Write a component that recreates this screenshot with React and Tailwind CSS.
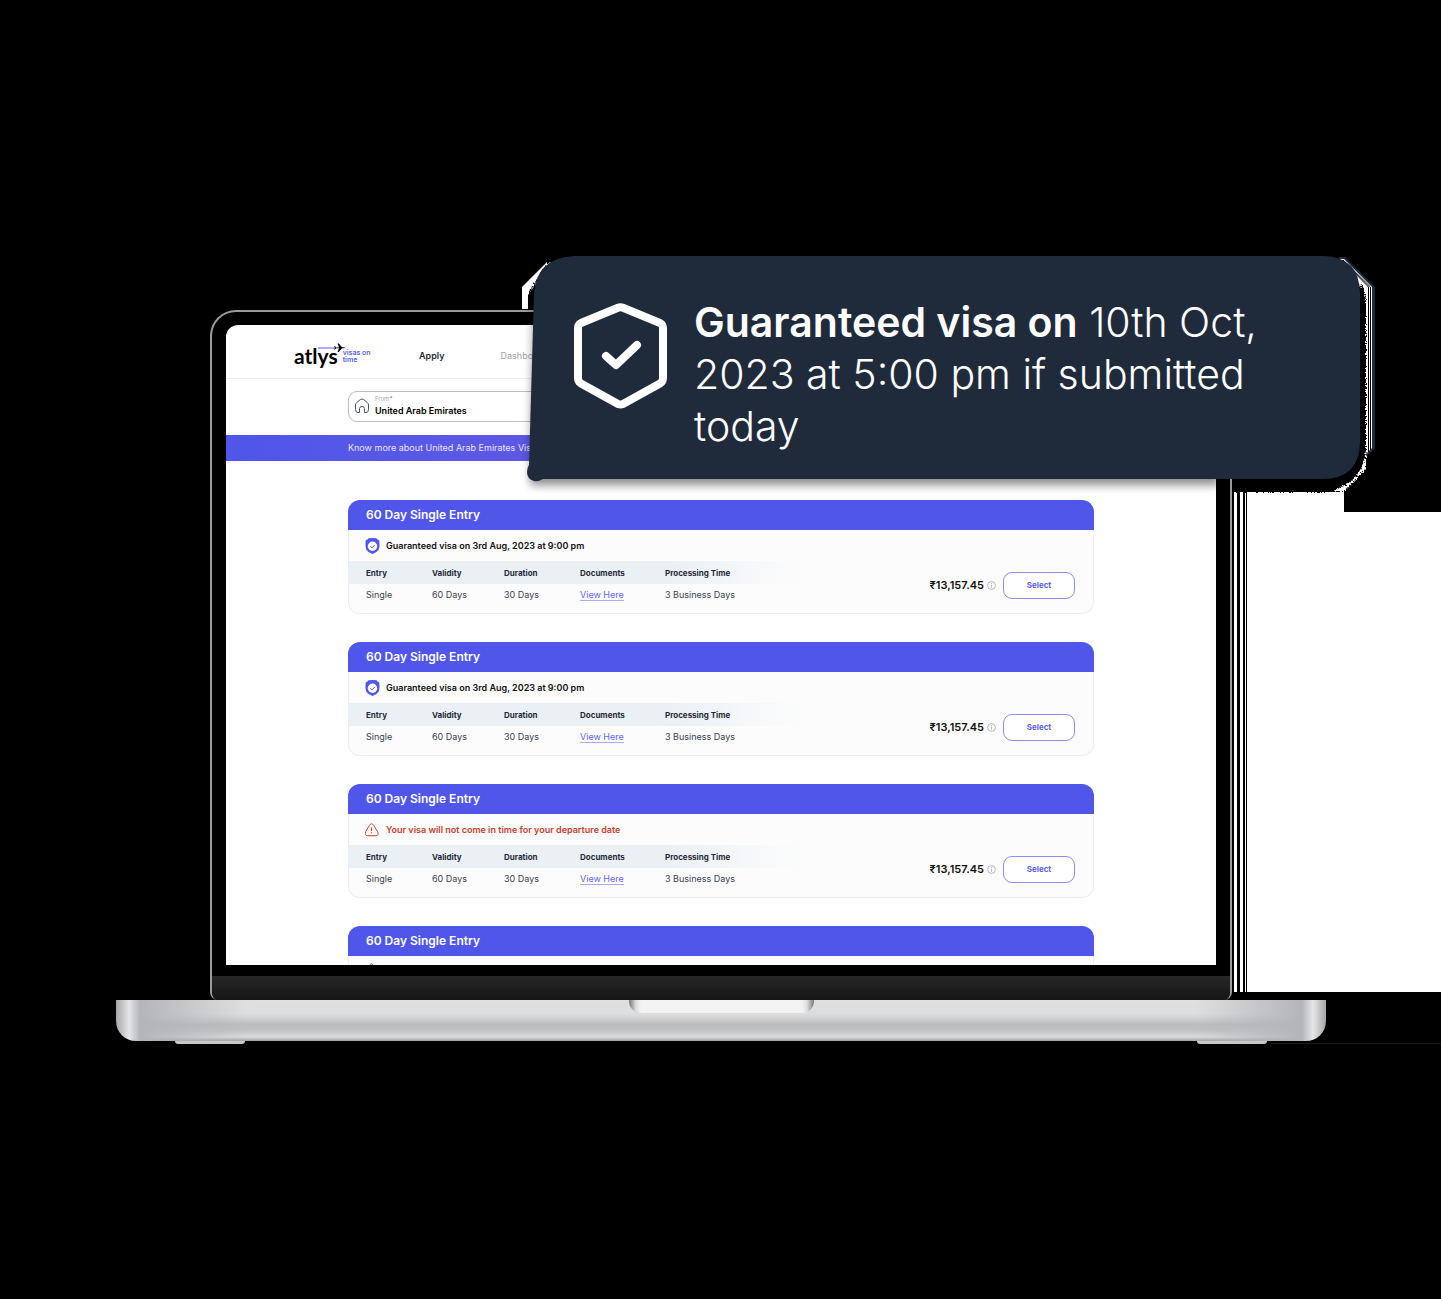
const visas = [
  { id: 1, onTime: true },
  { id: 2, onTime: true },
  { id: 3, onTime: false },
];

function Logo() {
  return (
    <a href="#home" className="flex w-[80px] items-center gap-[5px]" aria-label="atlys, visas on time">
      <span className="relative font-['Lato','Open_Sans',sans-serif] text-[21px] leading-6 font-bold text-black">
        atlys
        <svg className="absolute -top-0.5 left-6 h-3 w-7" viewBox="0 0 28 12" aria-hidden="true">
          <path d="M0 6H18" stroke="#5b5ff0" strokeWidth="1" />
          <path d="M18 5.4h3L19.6 1.5h1.2L24 5.2h2.4q1 .3 0 1H24L20.800 10h-1.2L21 6.300h-3l-1 1.2h-.8L17 5.800 16.200 4H17z" fill="#000" />
        </svg>
      </span>
      <span className="pt-px text-[7px] leading-[7px] font-semibold whitespace-pre text-[#5b5ff0]">{"visas on\ntime"}</span>
    </a>
  );
}

function ShieldIcon() {
  return (
    <svg className="h-4 w-[15px]" viewBox="0 0 15 16" aria-hidden="true">
      <path d="M3.500.3Q7.500-.2 11.500.3L12.500 1.600 14.200 2.200Q15 8 13.800 11.500 12 14.500 7.500 16 3 14.500 1.200 11.500 0 8 .8 2.200L2.500 1.600z" fill="#4f56e9" />
      <circle cx="7.500" cy="8.300" r="4.700" fill="#fff" />
      <path d="M5.300 8.300 7 9.900 9.800 6.900" fill="none" stroke="#4f56e9" strokeWidth="1" />
    </svg>
  );
}

function AlertIcon() {
  return (
    <svg className="h-4 w-[15px] shrink-0" viewBox="0 0 15 16" fill="none" stroke="#cf3b33" aria-hidden="true">
      <path d="M4.300 3.500Q6.500.2 8.700 3.500L12.500 9.500Q14.300 13.500 11 13.700H2.500Q-.8 13.500.8 9.500z" strokeWidth="1" />
      <path d="M6.500 5.500V9M6.500 10.200v1" strokeWidth="1.200" />
    </svg>
  );
}

function CardTitle() {
  return <h2 className="rounded-t-xl bg-[#4f56e9] pl-[18px] text-xs leading-[30px] font-semibold text-white">60 Day Single Entry</h2>;
}

function VisaCard({ onTime }) {
  return (
    <article className="shrink-0">
      <CardTitle />
      <div className="rounded-b-xl border border-t-0 border-[#ececfb] bg-[#fcfcfc]">
        <p className={onTime ? "flex h-[31px] items-center gap-1.5 pl-4 text-[9px] font-semibold text-[#111]" : "flex h-[31px] items-center gap-1.5 pl-4 text-[9px] font-semibold text-[#c2412d]"}>
          {onTime ? <ShieldIcon /> : <AlertIcon />}
          {onTime ? "Guaranteed visa on 3rd Aug, 2023 at 9:00 pm" : "Your visa will not come in time for your departure date"}
        </p>
        <div className="flex items-center justify-between pr-[18px]">
          <table className="mb-[7px] w-[452px] table-fixed text-left text-[#3a4150]">
            <thead className="bg-linear-to-r from-[#ebf0f5] from-70% to-[#fcfcfc] text-[8px] text-[#1e2939]">
              <tr className="h-[23px]">
                <th className="w-[83px] pl-[17px] font-bold">Entry</th>
                <th className="w-[72px] font-bold">Validity</th>
                <th className="w-[76px] font-bold">Duration</th>
                <th className="w-[85px] font-bold">Documents</th>
                <th className="font-bold">Processing Time</th>
              </tr>
            </thead>
            <tbody className="text-[9px]">
              <tr className="h-[22px]">
                <td className="pl-[17px]">Single</td>
                <td>60 Days</td>
                <td>30 Days</td>
                <td>
                  <a href="#documents" className="border-b border-[#a9abf6] text-[#6366f1]">View Here</a>
                </td>
                <td>3 Business Days</td>
              </tr>
            </tbody>
          </table>
          <div className="flex items-center pb-1">
            <span className="text-[11px] font-semibold text-[#111]">₹13,157.45</span>
            <svg className="mr-[7px] ml-[3px] size-[9px]" viewBox="0 0 9 9" fill="none" stroke="#a3a7b0" strokeWidth=".8" aria-hidden="true">
              <circle cx="4.500" cy="4.500" r="3.900" />
              <path d="M4.500 2V3M4.500 3.800V6.800" />
            </svg>
            <button type="button" className="h-[27px] w-[72px] rounded-[9px] border border-[#8b8ff5] bg-white text-[8px] font-bold text-[#5b5ff0]">Select</button>
          </div>
        </div>
      </div>
    </article>
  );
}

function PeekingCard() {
  return (
    <article>
      <CardTitle />
      <div className="h-10 border-x border-[#ececfb] bg-[#fcfcfc] pt-1.5 pl-4">
        <AlertIcon />
      </div>
    </article>
  );
}

function Screen() {
  return (
    <div className="flex aspect-[99/64] w-full flex-col overflow-hidden rounded-t-[12px] bg-white">
      <header className="flex h-[54px] shrink-0 items-center border-b border-[#ececf0] px-[68px] pt-2">
        <Logo />
        <nav className="flex gap-14 pl-[45px] text-[9px]">
          <a href="#apply" className="font-semibold text-[#1e2939]">Apply</a>
          <a href="#dashboard" className="text-[#9aa1b0]">Dashboard</a>
        </nav>
      </header>
      <div className="mx-auto flex h-14 w-full max-w-[746px] shrink-0 items-center pb-0.5">
        <div className="flex h-[31px] w-1/2 items-center gap-[5px] rounded-[9px] border border-[#b9bcc8] px-[5px]">
          <svg className="size-4" viewBox="0 0 16 16" fill="none" stroke="#4a5163" strokeWidth="1" aria-hidden="true">
            <path d="M5.500 14.500H4Q1.500 14.500 1.500 11.500V7Q1.500 5.500 3 4.300L6.300 1.600Q8 .5 9.700 1.600L13 4.300Q14.500 5.500 14.500 7V11.500Q14.500 14.500 12 14.500H10.500V10.500Q10.300 8.500 8 8.500 5.700 8.500 5.500 10.500z" />
          </svg>
          <div className="flex grow flex-col">
            <label htmlFor="from" className="text-[6px] leading-[8px] text-[#a3a7b8]">From<span className="text-[#5b5ff0]">*</span></label>
            <input id="from" defaultValue="United Arab Emirates" className="h-3.5 w-full bg-transparent text-[9px] font-semibold text-black outline-none" />
          </div>
        </div>
      </div>
      <div className="shrink-0 bg-linear-to-r from-[#4f56e9] to-[#7c5cd9] text-[9px] leading-[26px] text-[#e6e6fd]">
        <p className="mx-auto max-w-[746px]">Know more about United Arab Emirates Visa</p>
      </div>
      <main className="mx-auto flex w-full max-w-[746px] flex-col gap-7 pt-[39px]">
        {visas.map((v) => <VisaCard key={v.id} onTime={v.onTime} />)}
        <PeekingCard />
      </main>
    </div>
  );
}

function Base() {
  return (
    <div className="relative">
      <div className="flex h-[41px] justify-center rounded-b-[20px] bg-[linear-gradient(90deg,#a5a6a9_0,#e6e6e7_13px,#b4b5b8_24px,#b4b5b800_130px,#b4b5b800_calc(100%-130px),#b4b5b8_calc(100%-24px),#e6e6e7_calc(100%-13px),#a5a6a9_100%),linear-gradient(180deg,#dedfe0_0,#dcdddf_35%,#bbbcbe_60%,#c2c3c5_75%,#dadbdd_90%,#a0a1a3_100%)]">
        <div className="h-[13px] w-[185px] rounded-b-[12px] bg-[linear-gradient(90deg,#777_0,#ddd_7px,#f3f3f3_12px,#f3f3f3_calc(100%-12px),#ddd_calc(100%-7px),#777_100%)]" />
      </div>
      <div className="flex justify-between px-[59px]">
        <div className="h-[3px] w-[70px] rounded-b-sm bg-[#c6c9c8]" />
        <div className="h-[3px] w-[70px] rounded-b-sm bg-[#c6c9c8]" />
      </div>
    </div>
  );
}

function Callout() {
  return (
    <aside className="absolute -top-[60px] left-[404px] h-[250px] w-[860px]">
      <svg className="absolute inset-0 size-full" viewBox="520 250 860 250" aria-hidden="true">
        <defs>
          <filter id="soft" x="-5%" y="-10%" width="110%" height="125%"><feGaussianBlur stdDeviation="5" /></filter>
          <filter id="grain" x="-5%" y="-5%" width="110%" height="110%">
            <feTurbulence type="fractalNoise" baseFrequency=".9" numOctaves="1" seed="3" result="n" />
            <feDisplacementMap in="SourceGraphic" in2="n" scale="5" xChannelSelector="R" yChannelSelector="G" />
          </filter>
          <clipPath id="display"><path d="M500 250H1217V520H500z" /></clipPath>
        </defs>
        <path d="M522 309V287L547 262H552L528 295V309z" fill="#fff" />
        <path d="M530 309V292L550 262" fill="none" stroke="#000" strokeWidth="3" strokeDasharray="2 1" filter="url(#grain)" />
        <path d="M1338 257H1345L1375 287V448L1366 457V290z" fill="#1f2b3b" />
        <path d="M1337 259H1344L1372 287V448L1364 456V292z" fill="#fff" />
        <path d="M1342 260 1368.500 287V452M1343 260 1370.500 287V450" fill="none" stroke="#000" />
        <path d="M1366 455V468L1345 491H1334L1360 450z" fill="#fff" filter="url(#grain)" />
        <path d="M1234 470H1350L1361 282Q1366 292 1366 305V450Q1362 487 1324 492H1234z" fill="#060606" filter="url(#grain)" />
        <path d="M534 300 530 485H1220V300z" fill="#000" opacity=".45" filter="url(#soft)" clipPath="url(#display)" />
        <path d="M574 256H1322Q1360 256 1360 294V441Q1360 479 1322 479H543Q538 482 534 481 527 479 527 472 527 468 529 465L534 294Q536 258 574 256z" fill="#1f2b3b" />
      </svg>
      <div className="relative flex gap-[26px] pt-[46px] pl-[53px]">
        <svg className="mt-[7px] h-[106px] w-[95px] shrink-0" viewBox="0 0 95 106" fill="none" stroke="#fff" strokeLinejoin="round" strokeLinecap="round" aria-hidden="true">
          <path d="M45 4.800Q47.500 3.800 50 4.800L87 20Q90 21.500 90 25V75Q90 78.500 87 80.500L50 101Q47.500 102 45 101L8 80.500Q5 78.500 5 75V25Q5 21.500 8 20z" strokeWidth="8" />
          <path d="M33 53 43 62 64 42" strokeWidth="8" />
        </svg>
        <p className="w-[610px] text-[41px] leading-[52px] font-light text-white">
          <strong className="font-semibold">Guaranteed visa on</strong> 10th Oct,<br />2023 at 5:00 pm if submitted<br />today
        </p>
      </div>
    </aside>
  );
}

export default function App() {
  return (
    <div className="min-h-screen overflow-hidden bg-black pt-[310px] pl-px font-['Inter','Liberation_Sans',sans-serif]">
      <div className="relative mx-auto w-full max-w-[1210px]">
        <div className="absolute top-[182px] left-[1118px] flex h-[500px] w-screen" aria-hidden="true">
          <div className="w-[13px] bg-[linear-gradient(90deg,#fff_3px,#000_3px_6px,#fff_6px_9px,#000_9px_11px,#fff_11px_12px,#000_12px)]" />
          <div className="w-[97px] bg-white" />
          <div className="mt-5 grow bg-white" />
        </div>
        <div className="relative mx-[94px] overflow-hidden rounded-t-[26px] rounded-b-[8px] border-2 border-b-0 border-[#9b9b9b] bg-black">
          <div className="px-3.5 pt-[13px] pb-[11px]">
            <Screen />
          </div>
          <div className="h-6 bg-linear-to-b from-[#272727] to-[#151515]" />
        </div>
        <Base />
        <div className="absolute bottom-0 left-[1155px] h-px w-screen bg-[#1c1c1c]" aria-hidden="true" />
        <Callout />
      </div>
    </div>
  );
}
